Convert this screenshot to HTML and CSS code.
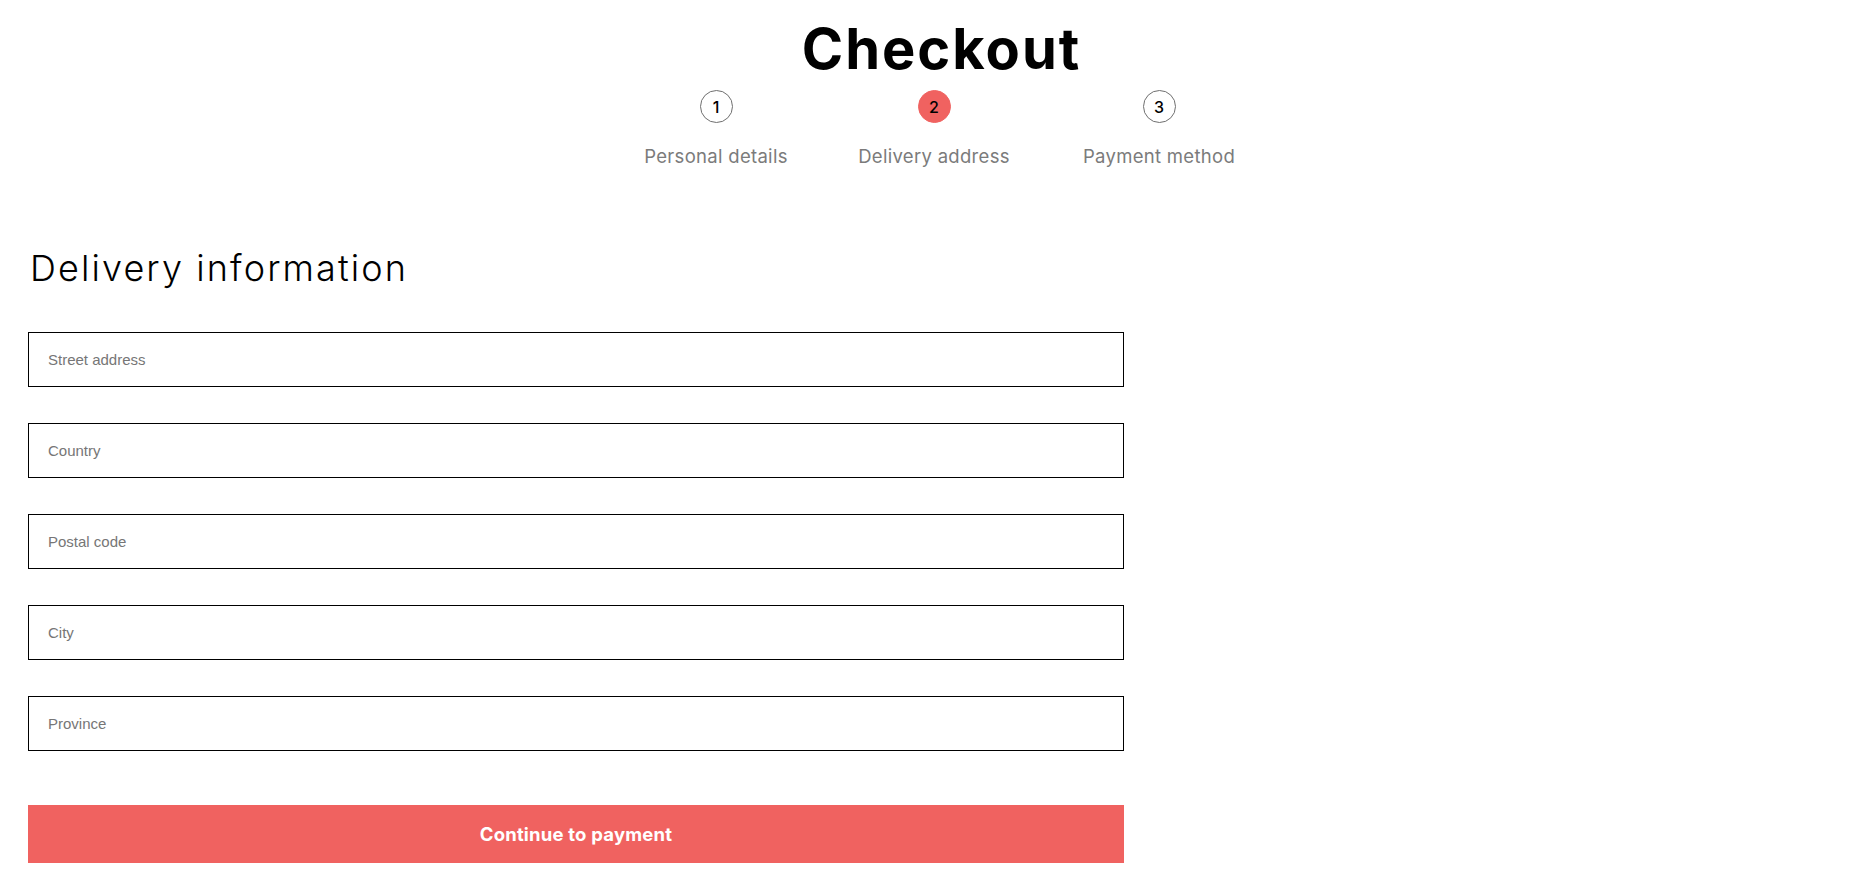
FILE: index.html
```html
<!DOCTYPE html>
<html lang="en">
<head>
<meta charset="utf-8">
<title>Checkout</title>
<link rel="stylesheet" href="styles.css">
</head>
<body>
<header class="header">
  <h1 class="title">Checkout</h1>
  <ol class="steps">
    <li class="step">
      <span class="step-num">1</span>
      <span class="step-label">Personal details</span>
    </li>
    <li class="step step-active">
      <span class="step-num">2</span>
      <span class="step-label">Delivery address</span>
    </li>
    <li class="step">
      <span class="step-num">3</span>
      <span class="step-label">Payment method</span>
    </li>
  </ol>
</header>
<main class="main">
  <h2 class="section-title">Delivery information</h2>
  <form class="form">
    <input class="field" type="text" placeholder="Street address">
    <input class="field" type="text" placeholder="Country">
    <input class="field" type="text" placeholder="Postal code">
    <input class="field" type="text" placeholder="City">
    <input class="field" type="text" placeholder="Province">
    <button class="submit" type="button">Continue to payment</button>
  </form>
</main>
</body>
</html>
```

FILE: styles.css
```css
* { box-sizing: border-box; }

html, body {
  margin: 0;
  padding: 0;
  background: #ffffff;
}

body {
  font-family: Inter, "Open Sans", "Liberation Sans", sans-serif;
  color: #000;
}

.header {
  display: flex;
  flex-direction: column;
  align-items: center;
  padding-top: 16px;
}

.title {
  margin: 0;
  font-size: 56px;
  line-height: 66px;
  font-weight: 700;
  letter-spacing: 2px;
  padding-left: 8px;
}

.steps {
  list-style: none;
  margin: 8px 0 0;
  padding: 0 0 0 7px;
  display: grid;
  grid-template-columns: 218px 218px 232px;
}

.step {
  display: flex;
  flex-direction: column;
  align-items: center;
}

.step-num {
  width: 33px;
  height: 33px;
  border: 1px solid #6f6f6f;
  border-radius: 50%;
  display: flex;
  align-items: center;
  justify-content: center;
  font-size: 16px;
  font-weight: 500;
  color: #000;
}

.step-active .step-num {
  background: #f06260;
  border-color: #f06260;
}

.step-label {
  margin-top: 22px;
  font-size: 18.5px;
  line-height: 22px;
  letter-spacing: 0.3px;
  color: #7b7b7b;
  font-weight: 400;
}

.main {
  padding: 0 0 0 28px;
  width: 1124px;
}

.section-title {
  margin: 79px 0 0 2px;
  font-size: 36px;
  line-height: 44px;
  font-weight: 300;
  letter-spacing: 2.1px;
}

.form {
  display: flex;
  flex-direction: column;
  gap: 36px;
  margin-top: 42px;
}

.field {
  display: block;
  width: 100%;
  height: 55px;
  margin: 0;
  border: 1px solid #000;
  border-radius: 0;
  padding: 0 19px;
  font-family: "Liberation Sans", Arial, sans-serif;
  font-size: 15px;
  color: #000;
  background: #fff;
  outline: none;
}

.field::placeholder {
  color: #767676;
}

.submit {
  display: block;
  width: 100%;
  height: 58px;
  margin-top: 18px;
  border: 0;
  background: #f06260;
  color: #fff;
  font-family: Inter, "Open Sans", sans-serif;
  font-size: 18.5px;
  font-weight: 700;
  letter-spacing: 0.2px;
  cursor: pointer;
}
```
